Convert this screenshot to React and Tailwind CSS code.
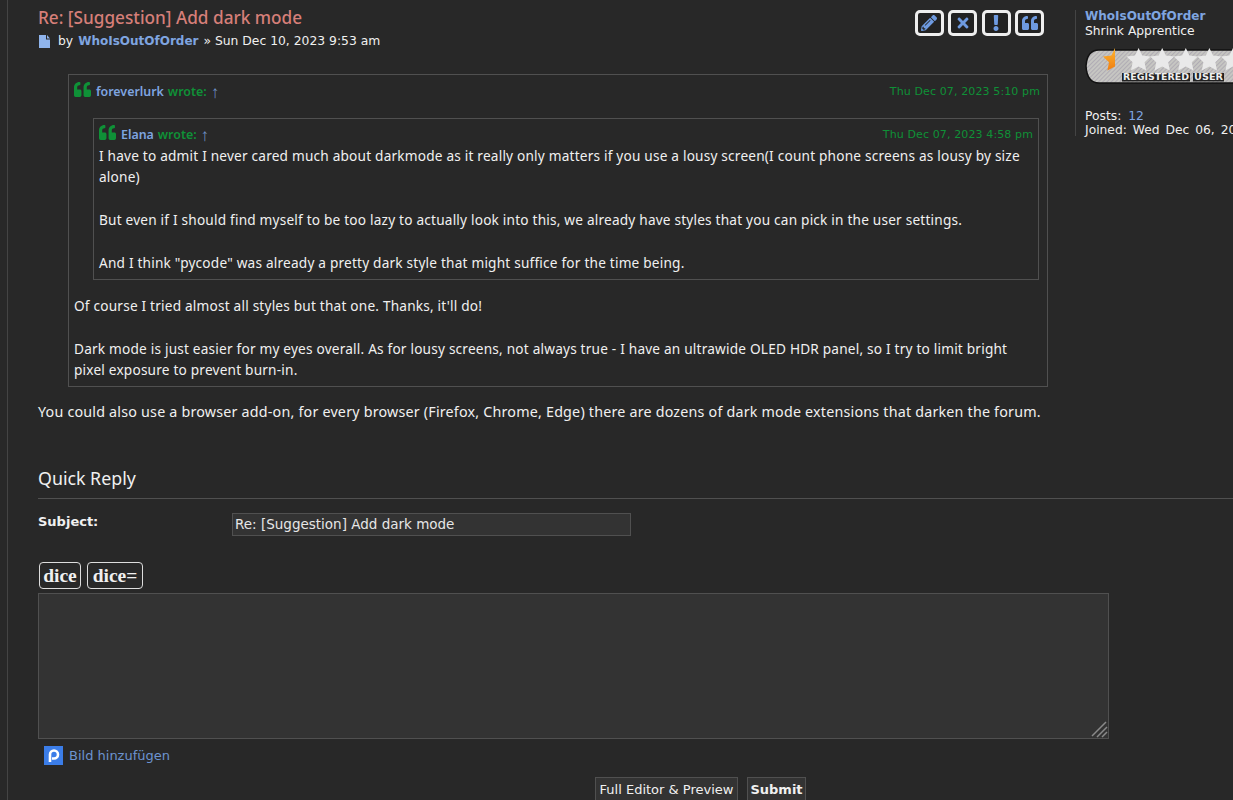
import React from "react";
import { FaPencilAlt, FaTimes, FaExclamation, FaQuoteLeft } from "react-icons/fa";

const verdana = "font-['DejaVu_Sans',Verdana,sans-serif]";
const trebuchet = "font-['Noto_Sans','Open_Sans',sans-serif]";

function PostButton({ children }) {
  return (
    <div className="w-[29px] h-[26px] flex items-center justify-center bg-[#222222] border-[3px] border-[#eeeeee] rounded-[5px] text-[#6e9ae0] text-[16px]">
      {children}
    </div>
  );
}

const STAR = "M0 0 L3.6 7.6 L12 8.6 L6 14.3 L7.6 22.6 L0 18.6 L-7.6 22.6 L-6 14.3 L-12 8.6 L-3.6 7.6 Z";

function RankBar() {
  const stars = [1, 2, 3, 4, 5];
  return (
    <svg width="148" height="37" viewBox="0 0 148 37" className="block">
      <defs>
        <pattern id="stripes" width="3" height="3" patternUnits="userSpaceOnUse" patternTransform="rotate(45)">
          <rect width="3" height="3" fill="#c6c6c2" />
          <rect width="1" height="3" fill="#b0acb4" />
        </pattern>
        <linearGradient id="orange" x1="0" y1="0" x2="0" y2="1">
          <stop offset="0" stopColor="#ffb52e" />
          <stop offset="1" stopColor="#ee7d12" />
        </linearGradient>
      </defs>
      <path d="M148 2 H14 Q2 2 1 18 Q2 35 14 35 H148" fill="url(#stripes)" stroke="#111111" strokeWidth="1.5" />
      {stars.map((i) => (
        <path key={i} transform={`translate(${30 + i * 23.6} 0)`} d={STAR} fill="#e9e9e9" />
      ))}
      <path
        transform="translate(30 0)"
        d="M0 0 L0 18.6 L-7.6 22.6 L-6 14.3 L-12 8.6 L-3.6 7.6 Z"
        fill="url(#orange)"
      />
      <rect x="37" y="25" width="68" height="8.5" fill="#222222" />
      <rect x="108" y="25" width="31" height="8.5" fill="#222222" />
      <text x="38" y="32" fontFamily="DejaVu Sans, sans-serif" fontSize="8" fontWeight="700" fill="#eeeeee" textLength="66" lengthAdjust="spacingAndGlyphs">REGISTERED</text>
      <text x="109" y="32" fontFamily="DejaVu Sans, sans-serif" fontSize="8" fontWeight="700" fill="#eeeeee" textLength="29" lengthAdjust="spacingAndGlyphs">USER</text>
    </svg>
  );
}

function QuoteHead({ name, date, dateClass }) {
  return (
    <div className="flex items-center justify-between h-[20px] tracking-normal">
      <div className="flex items-center text-[12.4px] font-semibold text-[#0f9137]">
        <FaQuoteLeft className="text-[17px] mr-[5px] -mt-[5px]" />
        <span className="text-[#7fa5e0] mr-1">{name}</span>
        <span>wrote:</span>
        <span className="text-[#6e8fc4] ml-1 font-normal text-[17px]">↑</span>
      </div>
      <div className={`${verdana} text-[11px] tracking-[0.12px] text-[#0f9137] ${dateClass}`}>{date}</div>
    </div>
  );
}

export default function App() {
  return (
    <div className={`h-[800px] w-[1233px] overflow-hidden bg-[#282828] text-[#f0f0f0] ${verdana}`}>
      <div className="ml-[7px] h-full border-l border-[#444444] pl-[30px] pt-[8px] w-[1400px]">
        <div className="flex">
          {/* post */}
          <div className="w-[1010px]">
            <div className="flex justify-between">
              <div>
                <h3 className={`${trebuchet} text-[#d67f79] text-[17.2px] leading-[19px] font-medium`}>
                  Re: [Suggestion] Add dark mode
                </h3>
                <p className="flex items-center text-[12.35px] mt-[5px] leading-[18px]">
                  <svg width="12" height="13" viewBox="0 0 12 13" className="ml-[1px] mr-[7px]">
                    <path d="M0 0 H7 V4.5 H11 V13 H0 Z M8 0 L11 3.5 H8 Z" fill="#8fb4ec" />
                  </svg>
                  by <span className="font-bold text-[12px] text-[#7fa5e0] ml-[5px] mr-[5px]">WhoIsOutOfOrder</span> » Sun Dec 10, 2023 9:53 am
                </p>
              </div>
              <div className="flex gap-[4.4px] mr-[4px] mt-[2px]">
                <PostButton><FaPencilAlt /></PostButton>
                <PostButton><FaTimes /></PostButton>
                <PostButton><FaExclamation /></PostButton>
                <PostButton><FaQuoteLeft /></PostButton>
              </div>
            </div>

            <div className={`${trebuchet} text-[14.3px] tracking-[0.2px] leading-[21.45px]`}>
              <div className="ml-[30px] mt-[24px] border border-[#505050] px-[5px] pt-[7px] pb-[6px] text-[13.65px]">
                <QuoteHead name="foreverlurk" date="Thu Dec 07, 2023 5:10 pm" dateClass="mr-[2px]" />
                <div className="ml-[19px] mr-[3px] mt-[16px] border border-[#505050] pl-[5px] pr-[5px] pt-[6px] pb-[5px]">
                  <QuoteHead name="Elana" date="Thu Dec 07, 2023 4:58 pm" />
                  <p>I have to admit I never cared much about darkmode as it really only matters if you use a lousy screen(I count phone screens as lousy by size alone)</p>
                  <p className="mt-[21.45px]">But even if I should find myself to be too lazy to actually look into this, we already have styles that you can pick in the user settings.</p>
                  <p className="mt-[21.45px]">And I think "pycode" was already a pretty dark style that might suffice for the time being.</p>
                </div>
                <p className="mt-[15px]">Of course I tried almost all styles but that one. Thanks, it'll do!</p>
                <p className="mt-[21.45px]">Dark mode is just easier for my eyes overall. As for lousy screens, not always true - I have an ultrawide OLED HDR panel, so I try to limit bright pixel exposure to prevent burn-in.</p>
              </div>
              <p className="mt-[14px] whitespace-nowrap">You could also use a browser add-on, for every browser (Firefox, Chrome, Edge) there are dozens of dark mode extensions that darken the forum.</p>
            </div>
          </div>

          {/* profile */}
          <div className="ml-[27px] mt-[2px] h-[126px] border-l border-[#444444] pl-[9px] text-[12.3px] leading-[14.5px] whitespace-nowrap">
            <div className="font-bold text-[12px] text-[#7fa5e0] mt-[-1px]">WhoIsOutOfOrder</div>
            <div>Shrink Apprentice</div>
            <div className="mt-[10px]"><RankBar /></div>
            <div className="mt-[24px] [word-spacing:3px]">Posts: <span className="text-[#7fa5e0]">12</span></div>
            <div className="-mt-[1px] [word-spacing:2px]">Joined: Wed Dec 06, 2023</div>
          </div>
        </div>

        {/* quick reply */}
        <h2 className={`${trebuchet} mt-[43px] text-[17.8px] leading-[24px] border-b border-[#505050] pb-[8px] font-normal`}>
          Quick Reply
        </h2>
        <div className="flex mt-[14px] items-start">
          <label className="w-[194px] font-bold text-[13px] leading-[18px]">Subject:</label>
          <div className="w-[399px] h-[23px] bg-[#333333] border border-[#505050] px-[2px] text-[13.5px] leading-[21px] text-[#e6e6e6]">
            Re: [Suggestion] Add dark mode
          </div>
        </div>
        <div className="flex gap-[6px] mt-[26px] ml-[1px] font-['Liberation_Serif',serif] font-bold text-[19.5px]">
          <div className="h-[27px] w-[42px] flex items-center justify-center border border-[#dddddd] rounded-[4px]">dice</div>
          <div className="h-[27px] w-[56px] flex items-center justify-center border border-[#dddddd] rounded-[4px]">dice=</div>
        </div>
        <div className="relative mt-[4px] w-[1071px] h-[146px] bg-[#333333] border border-[#505050]">
          <svg width="18" height="18" viewBox="0 0 18 18" className="absolute right-0 bottom-0">
            <path d="M16 2 L2 16 M17 7 L7 17 M17 12 L12 17" stroke="#8a8a8a" strokeWidth="1.5" />
          </svg>
        </div>
        <div className="flex items-center ml-[6px] mt-[7px] h-[19px] text-[13px] text-[#6d94d0]">
          <svg width="19" height="19" viewBox="0 0 19 19" className="mr-[6px]">
            <rect width="19" height="19" fill="#3b7de8" />
            <path d="M6 16 V8.5 a4 4 0 1 1 4 4 H8" fill="none" stroke="#ffffff" strokeWidth="2.6" />
          </svg>
          Bild hinzufügen
        </div>
        <div className="flex ml-[557px] mt-[12px] gap-[9px] text-[13px]">
          <div className="h-[26px] w-[143px] bg-[#333333] border border-[#505050] flex items-center justify-center">Full Editor &amp; Preview</div>
          <div className="h-[26px] w-[59px] bg-[#333333] border border-[#505050] flex items-center justify-center font-bold">Submit</div>
        </div>
      </div>
    </div>
  );
}
